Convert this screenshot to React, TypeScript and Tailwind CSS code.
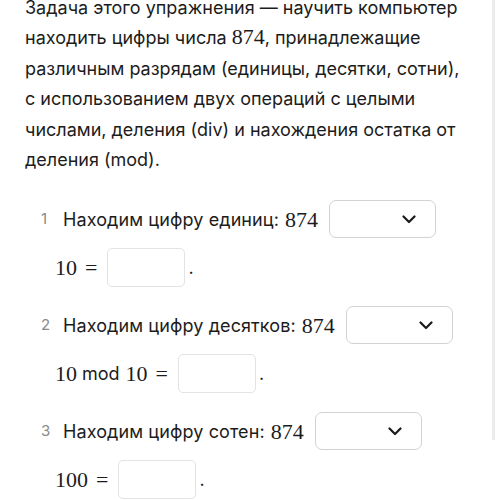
const sans = "font-['Inter',sans-serif]";
const serif = "font-['Liberation_Serif',serif]";

interface Step {
  n: number;
  label: string;
  prefix: string;
  mod?: boolean;
}

const steps: Step[] = [
  { n: 1, label: "Находим цифру единиц:", prefix: "10" },
  { n: 2, label: "Находим цифру десятков:", prefix: "10", mod: true },
  { n: 3, label: "Находим цифру сотен:", prefix: "100" },
];

const intro = [
  "Задача этого упражнения — научить компьютер",
  "находить цифры числа",
  "различным разрядам (единицы, десятки, сотни),",
  "с использованием двух операций с целыми",
  "числами, деления (div) и нахождения остатка от",
  "деления (mod).",
];

function Chevron() {
  return (
    <svg width="14" height="9" viewBox="0 0 14 9" fill="none">
      <path d="M1.5 1.5L7 7L12.5 1.5" stroke="#1a1a1a" strokeWidth="2.2" strokeLinecap="round" strokeLinejoin="round" />
    </svg>
  );
}

function StepRow({ n, label, prefix, mod }: Step) {
  return (
    <div className="flex flex-col gap-[10px]">
      <div className="flex items-center">
        <span className="w-[63px] pl-[41px] text-[15px] text-[#8a8a8a]">{n}</span>
        <span className="text-[18px] tracking-[0.1px] text-[#1c1c1c]">{label}</span>
        <span className={`${serif} ml-[6px] text-[22px] text-[#1c1c1c]`}>874</span>
        <div className="ml-[11px] flex h-[38px] w-[107px] items-center justify-end rounded-[7px] border border-[#d2d2d2] pr-[19px]">
          <Chevron />
        </div>
      </div>
      <div className="flex items-center pl-[55px]">
        <span className={`${serif} text-[22px] text-[#1c1c1c]`}>{prefix}</span>
        {mod && (
          <>
            <span className="ml-[5px] text-[18px] text-[#1c1c1c]">mod</span>
            <span className={`${serif} ml-[6px] text-[22px] text-[#1c1c1c]`}>10</span>
          </>
        )}
        <span className={`${serif} ml-[8px] text-[22px] text-[#1c1c1c]`}>=</span>
        <div className="ml-[10px] h-[39px] w-[78px] rounded-[5px] border border-[#e3e3e3]" />
        <span className="ml-[3px] text-[18px] text-[#1c1c1c]">.</span>
      </div>
    </div>
  );
}

export default function App() {
  return (
    <div className={`${sans} flex h-[500px] w-[500px] overflow-hidden bg-white`}>
      <div className="w-[492px] shrink-0">
        <div className="-mt-[7px] pl-[25px] text-[18px] leading-[30.4px] text-[#1c1c1c]">
          {intro.map((line, i) => (
            <div key={i} className="whitespace-nowrap">
              {i === 1 ? (
                <>
                  {line} <span className={`${serif} text-[22px] leading-none`}>874</span>, принадлежащие
                </>
              ) : (
                line
              )}
            </div>
          ))}
        </div>
        <div className="mt-[25px] flex flex-col gap-[19px]">
          {steps.map((s) => (
            <StepRow key={s.n} {...s} />
          ))}
        </div>
      </div>
      <div className="h-[440px] w-[3px] bg-[#ececec]" />
    </div>
  );
}
